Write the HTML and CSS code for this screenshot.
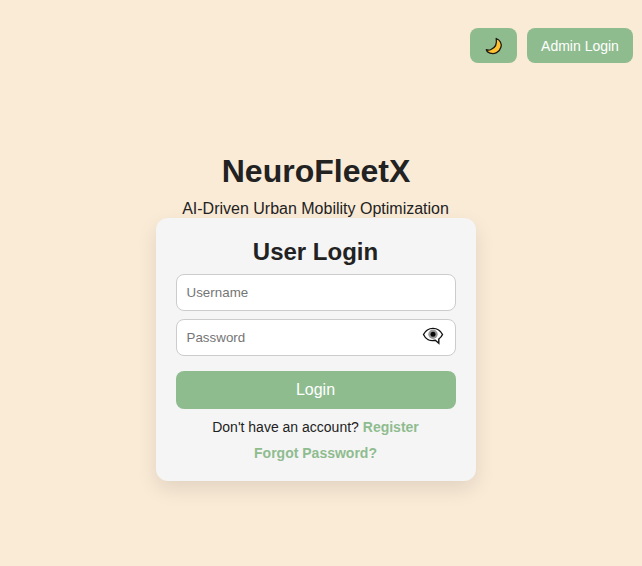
FILE: index.html
```html
<!DOCTYPE html>
<html lang="en">
<head>
<meta charset="utf-8">
<title>NeuroFleetX</title>
<link rel="stylesheet" href="styles.css">
</head>
<body>
<header class="topbar">
  <button class="top-btn theme" aria-label="Theme"><svg width="18" height="18" viewBox="0 0 18 18"><path d="M11.200 1.500C15 2.800 17 6.500 15.900 10.200C14.400 15.400 9.500 17.600 5 16.200C3 15.600 1.600 14.300 1.300 12.700C3 13.300 4.500 13.300 6 12.500C10 10.800 12.300 7.500 11.200 1.500Z" fill="#ffc233" stroke="#1d1b14" stroke-width="1.300" stroke-linejoin="round"/></svg></button>
  <button class="top-btn">Admin Login</button>
</header>
<main class="page">
  <h1>NeuroFleetX</h1>
  <p class="tagline">AI-Driven Urban Mobility Optimization</p>
  <form class="card">
    <h2>User Login</h2>
    <input class="field" type="text" placeholder="Username">
    <div class="password">
      <input class="field" type="password" placeholder="Password">
      <svg class="eye" width="22" height="18" viewBox="0 0 22 18"><path d="M1.500 7.500C5.500 -0.700 16.500 -0.700 20.500 7.500C19.500 9.700 18.300 11 16.800 12V16.200L13.300 13.300C8 14.600 3.500 12 1.500 7.500Z" fill="#fff" stroke="#111" stroke-width="1.400"/><circle cx="11" cy="7.300" r="4.700" fill="#999"/><circle cx="11" cy="7.300" r="2.500" fill="#080808"/></svg>
    </div>
    <button class="submit" type="button">Login</button>
    <p class="line">Don't have an account? <a>Register</a></p>
    <p class="line forgot"><a>Forgot Password?</a></p>
  </form>
</main>
</body>
</html>
```
FILE: styles.css
```css
* { box-sizing: border-box; }
body { margin: 0; height: 566px; overflow: hidden; background: #faebd7; color: #222; font-family: "Liberation Sans", Arial, sans-serif; }
button, input { font-family: inherit; }
.topbar { display: flex; justify-content: flex-end; gap: 10px; padding: 28px 9px 0 0; height: 63px; }
.top-btn { height: 35px; width: 106px; padding: 0; border: 0; border-radius: 8px; background: #8fbc8f; color: #fff; font-size: 14px; }
.theme { width: 47px; display: flex; align-items: center; justify-content: center; }
.page { width: 320px; margin: 90px 0 0 156px; text-align: center; }
h1 { margin: 0; font-size: 32px; line-height: 37px; }
.tagline { margin: 9px 0 0; padding-right: 1px; font-size: 16px; line-height: 19px; }
.card { height: 263px; padding: 20px; border-radius: 12px; background: #f5f5f5; box-shadow: 0 8px 20px rgba(0,0,0,.1); }
h2 { margin: 0 0 8px; padding-right: 1px; font-size: 24px; line-height: 28px; }
.field { display: block; width: 280px; height: 37px; padding: 0 9.500px; border: 1px solid #ccc; border-radius: 8px; background: #fff; font-size: 13.333px; letter-spacing: .03px; outline: 0; }
.password { position: relative; margin-top: 8px; }
.eye { position: absolute; right: 12px; top: 8px; }
.submit { display: block; width: 280px; height: 38px; margin-top: 15px; padding: 0 1px 0 0; border: 0; border-radius: 8px; background: #8fbc8f; color: #fff; font-size: 16px; }
.line { margin: 10px 0 0; padding-right: 1px; font-size: 14px; line-height: 16px; }
.line a { color: #8fbc8f; font-weight: bold; }
```
